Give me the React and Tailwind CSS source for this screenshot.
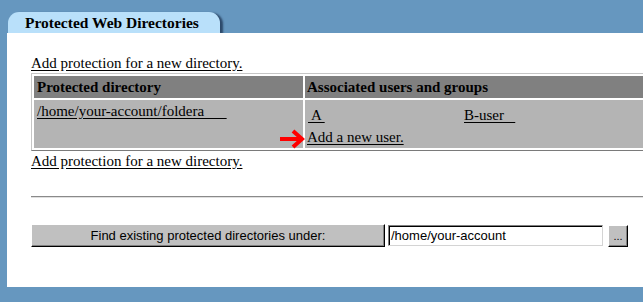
import React from 'react';

const serif = "font-['Liberation_Serif','Times_New_Roman',serif]";
const sans = "font-['Liberation_Sans',Arial,sans-serif]";

function RedArrow() {
    return (
        <svg className="absolute left-[279px] top-[129px]" width="26" height="20" viewBox="0 0 26 20">
            <path d="M1 10 H22" stroke="#ff0000" strokeWidth="4" fill="none" />
            <path d="M14 2 L23 10 L14 18" stroke="#ff0000" strokeWidth="4" fill="none" strokeLinejoin="miter" />
        </svg>
    );
}

export default function App() {
    return (
        <div className={`relative w-[643px] h-[302px] overflow-hidden bg-[#6697bf] pt-[12px] pl-[7px] ${serif} text-black`}>
            <div className="ml-[1px] w-[212px] h-[21px] rounded-t-[11px] bg-[#b9e0fa] shadow-[3px_1px_2px_rgba(20,40,70,0.7)] pl-[17px] pt-[1px] text-[15.5px] font-bold leading-[20px]">
                Protected Web Directories
            </div>
            <div className="relative w-[700px] h-[254px] bg-white pl-[24px] pt-[21px]">
                <a className="block w-max text-[15px] leading-[18px] underline underline-offset-[2px]">Add protection for a new directory.</a>
                <table className="mt-[1px] w-[640px] border border-t-[#c6c6c6] border-l-[#c6c6c6] border-b-[#7a7a7a] border-r-[#7a7a7a] border-separate border-spacing-[2px] text-[15px]">
                    <tbody>
                        <tr className="h-[22px]">
                            <th className="w-[269px] bg-[#808080] text-left font-bold pl-[3px] leading-[18px]">Protected directory</th>
                            <th className="bg-[#808080] text-left font-bold pl-[2px] leading-[18px]">Associated users and groups</th>
                        </tr>
                        <tr className="h-[48px]">
                            <td className="bg-[#b4b4b4] align-top pl-[3px] pt-[2px] leading-[18px]">
                                <a className="underline underline-offset-[2px] whitespace-pre">/home/your-account/foldera      </a>
                            </td>
                            <td className="bg-[#b4b4b4] align-top pl-[2px] pt-[6px] leading-[18px]">
                                <div className="flex">
                                    <a className="w-[157px] pl-[1px]"><span className="underline underline-offset-[2px] whitespace-pre"> A </span></a>
                                    <a className="underline underline-offset-[2px] whitespace-pre">B-user   </a>
                                </div>
                                <a className="block w-max mt-[4px] underline underline-offset-[2px]">Add a new user.</a>
                            </td>
                        </tr>
                    </tbody>
                </table>
                <a className="block w-max mt-[1px] text-[15px] leading-[18px] underline underline-offset-[2px]">Add protection for a new directory.</a>
                <div className="mt-[26px] w-[640px] border-t border-t-[#8a8a8a] border-b border-b-[#e0e0e0]"></div>
                <div className={`mt-[26px] flex items-start ${sans}`}>
                    <button className="w-[354px] h-[23px] bg-[#c0c0c0] border border-t-white border-l-white border-b-black border-r-black text-center text-[13px] leading-[20px] shadow-[inset_-1px_-1px_0_#808080]">
                        Find existing protected directories under:
                    </button>
                    <div className="ml-[3px] mt-[1px] w-[215px] h-[21px] border border-t-[#808080] border-l-[#808080] border-b-[#d4d4d4] border-r-[#d4d4d4] shadow-[inset_1px_1px_0_#000] bg-white pl-[2px] pt-[1px] text-[13px] leading-[18px]">
                        /home/your-account
                    </div>
                    <button className="ml-[5px] mt-[1px] w-[20px] h-[22px] bg-[#c0c0c0] border border-t-white border-l-white border-b-black border-r-black text-[11px] leading-[18px] shadow-[inset_-1px_-1px_0_#808080]">
                        ...
                    </button>
                </div>
            </div>
            <RedArrow />
        </div>
    );
}
